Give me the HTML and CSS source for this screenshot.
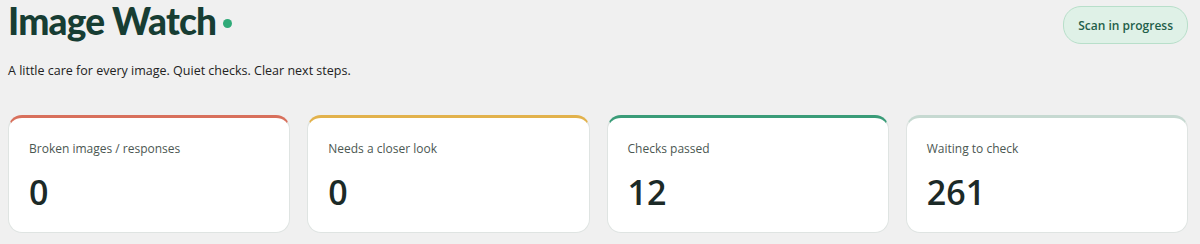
FILE: index.html
```html
<!DOCTYPE html>
<html lang="en">
<head>
<meta charset="utf-8">
<title>Image Watch</title>
<link rel="stylesheet" href="styles.css">
</head>
<body>
<div class="page">
  <header class="top">
    <div class="intro">
      <h1 class="title">Image Watch <span class="dot"></span></h1>
      <p class="sub">A little care for every image. Quiet checks. Clear next steps.</p>
    </div>
    <div class="pill">Scan in progress</div>
  </header>
  <section class="cards">
    <div class="card red"><div class="label">Broken images / responses</div><div class="num">0</div></div>
    <div class="card amber"><div class="label">Needs a closer look</div><div class="num">0</div></div>
    <div class="card green"><div class="label">Checks passed</div><div class="num">12</div></div>
    <div class="card gray"><div class="label">Waiting to check</div><div class="num">261</div></div>
  </section>
</div>
</body>
</html>
```
FILE: styles.css
```css
html, body { margin: 0; padding: 0; }
body {
  background: #f0f0f0;
  font-family: "Open Sans", "Noto Sans", sans-serif;
  color: #1d2b27;
}
.page { padding: 0 12px 0 8px; }
.top { display: flex; justify-content: space-between; align-items: flex-start; }
.title {
  margin: 0;
  font-family: Lato, "Open Sans", sans-serif;
  font-size: 37px;
  line-height: 42px;
  font-weight: 900;
  color: #173d33;
  letter-spacing: -0.8px;
  display: flex;
  align-items: center;
  gap: 7px;
}
.dot { width: 9px; height: 9px; border-radius: 50%; background: #2faa78; display: inline-block; margin-top: 4px; }
.sub { margin: 20px 0 0; font-size: 12.5px; line-height: 18px; color: #222; }
.pill {
  margin-top: 6px;
  height: 36px;
  padding: 0 14px;
  display: flex; align-items: center;
  border-radius: 18px;
  background: #dff1e7;
  border: 1px solid #b8dfca;
  color: #1f5f4a;
  font-size: 12px;
  font-weight: 600;
}
.cards {
  margin-top: 35px;
  display: grid;
  grid-template-columns: repeat(4, 1fr);
  gap: 17px;
}
.card {
  background: #fff;
  border: 1px solid #dfe4e2;
  border-top: 3px solid;
  border-radius: 14px;
  height: 118px;
  box-sizing: border-box;
  padding: 22px 20px 0;
}
.red { border-top-color: #d8705c; }
.amber { border-top-color: #e2b24c; }
.green { border-top-color: #3a9c78; }
.gray { border-top-color: #c6d9d1; }
.label { font-size: 12px; line-height: 17px; color: #4b5752; }
.num { margin-top: 15px; font-size: 34px; line-height: 40px; font-weight: 600; color: #1c2a27; }
```
